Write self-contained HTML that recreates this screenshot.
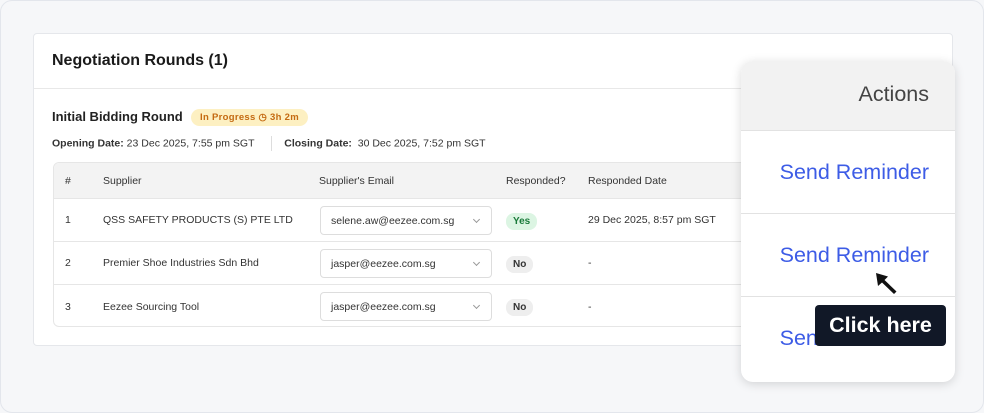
<!DOCTYPE html>
<html><head><style>
*{box-sizing:border-box;margin:0;padding:0}
body{width:984px;height:413px;background:#f6f7f9;font-family:"Liberation Sans",sans-serif;position:relative;overflow:hidden;color:#222}
.frame{position:absolute;left:0;top:0;width:984px;height:413px;border:1px solid #e3e6ec;border-radius:12px}
.card{position:absolute;left:33px;top:33px;width:920px;height:313px;background:#fff;border:1px solid #e5e7eb;border-radius:4px}
.title{position:absolute;left:18px;top:18px;font-size:16px;font-weight:bold;color:#1a1a1a}
.hr{position:absolute;left:0;right:0;top:54px;border-top:1px solid #e8e8e8}
.sub{position:absolute;left:18px;top:75px;font-size:13px;font-weight:bold;color:#222}
.badge{position:absolute;left:157px;top:75px;background:#fdf0c2;color:#c46a12;font-size:9.5px;font-weight:bold;border-radius:9px;padding:3px 9px;height:17px;letter-spacing:.3px}
.dates{position:absolute;left:18px;top:102px;font-size:10.5px;color:#333}
.dates b{font-weight:bold}
.tbl{position:absolute;left:19px;top:128px;width:720px;height:165px;border:1px solid #e6e6e6;border-radius:6px;overflow:hidden}
.th{position:absolute;left:0;right:0;top:0;height:36px;background:#f3f3f3;border-bottom:1px solid #e6e6e6}
.row{position:absolute;left:0;right:0;height:43px;border-bottom:1px solid #e6e6e6}
.c{position:absolute;font-size:10.5px;color:#333;top:50%;transform:translateY(-50%);white-space:nowrap}
.sel{position:absolute;left:266px;top:7px;width:172px;height:29px;border:1px solid #ddd;border-radius:4px;font-size:10.5px;padding:8px 10px;color:#333}
.sel:after{content:"";position:absolute;right:12px;top:10px;width:4px;height:4px;border-right:1px solid #999;border-bottom:1px solid #999;transform:rotate(45deg)}
.pill{position:absolute;left:452px;top:14px;font-size:10px;font-weight:bold;border-radius:8px;padding:3px 7px}
.pop{position:absolute;left:741px;top:61px;width:214px;height:321px;background:#fff;border-radius:12px;box-shadow:0 2px 10px rgba(0,0,0,.15);overflow:hidden}
.ph{height:70px;background:#f2f2f2;border-bottom:1px solid #e2e2e2;font-size:21.5px;color:#444;text-align:right;padding:21px 26px 0 0}
.pr{height:83px;border-bottom:1px solid #e2e2e2;font-size:21.5px;color:#3d5ce6;text-align:right;padding:29px 26px 0 0}
.tip{position:absolute;left:815px;top:305px;width:131px;height:41px;background:#111827;border-radius:4px;color:#fff;font-size:21.5px;font-weight:bold;text-align:center;line-height:41px}
</style></head><body>
<div class="frame"></div>
<div class="card">
<div class="title">Negotiation Rounds (1)</div>
<div class="hr"></div>
<div class="sub">Initial Bidding Round</div>
<div class="badge">In Progress &#9719; 3h 2m</div>
<div class="dates"><b>Opening Date:</b> 23 Dec 2025, 7:55 pm SGT <span style="display:inline-block;width:1px;height:15px;background:#ddd;vertical-align:middle;margin:0 12px 0 14px"></span><b>Closing Date:</b>&nbsp; 30 Dec 2025, 7:52 pm SGT</div>
<div class="tbl">
<div class="th"><span class="c" style="left:11px">#</span><span class="c" style="left:49px">Supplier</span><span class="c" style="left:265px">Supplier's Email</span><span class="c" style="left:452px">Responded?</span><span class="c" style="left:534px">Responded Date</span></div>
<div class="row" style="top:36px"><span class="c" style="left:11px">1</span><span class="c" style="left:49px">QSS SAFETY PRODUCTS (S) PTE LTD</span><div class="sel">selene.aw@eezee.com.sg</div><span class="pill" style="background:#dcf5e3;color:#1a7a3a">Yes</span><span class="c" style="left:534px">29 Dec 2025, 8:57 pm SGT</span></div>
<div class="row" style="top:79px"><span class="c" style="left:11px">2</span><span class="c" style="left:49px">Premier Shoe Industries Sdn Bhd</span><div class="sel">jasper@eezee.com.sg</div><span class="pill" style="background:#eee;color:#333">No</span><span class="c" style="left:534px">-</span></div>
<div class="row" style="top:122px;border-bottom:none"><span class="c" style="left:11px">3</span><span class="c" style="left:49px">Eezee Sourcing Tool</span><div class="sel">jasper@eezee.com.sg</div><span class="pill" style="background:#eee;color:#333">No</span><span class="c" style="left:534px">-</span></div>
</div>
</div>
<div class="pop">
<div class="ph">Actions</div>
<div class="pr">Send Reminder</div>
<div class="pr">Send Reminder</div>
<div class="pr" style="border:none">Send Reminder</div>
</div>
<svg style="position:absolute;left:874px;top:271px" width="26" height="26" viewBox="0 0 26 26"><path d="M2 2 L4 15 L8 11.5 L20 23 L22.5 20.5 L10.5 9 L14 5.5 Z" fill="#111"/></svg>
<div class="tip">Click here</div>
</body></html>
